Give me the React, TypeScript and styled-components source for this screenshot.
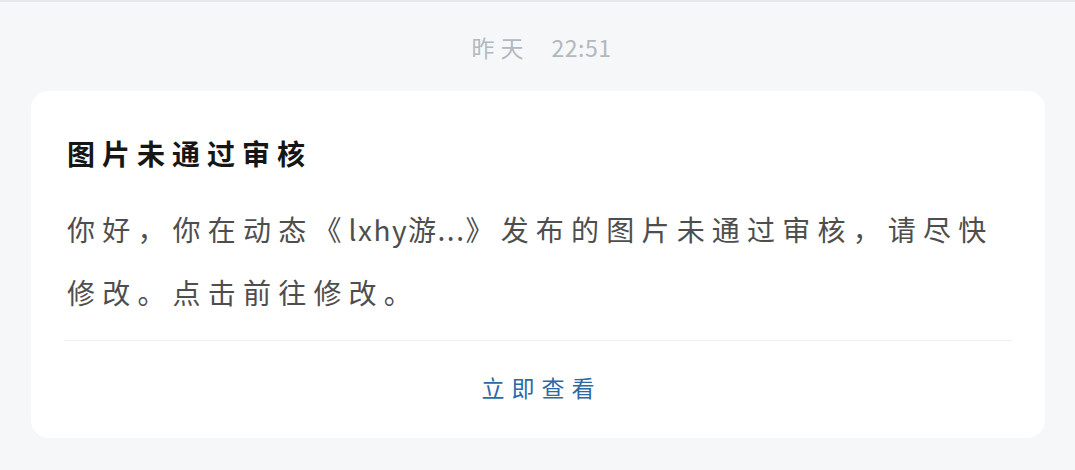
import React from "react";
import styled, { createGlobalStyle } from "styled-components";

const Global = createGlobalStyle`
  html, body {
    margin: 0;
    padding: 0;
    background: #f6f7f9;
  }
  body {
    font-family: "Noto Sans CJK SC", "Noto Sans", sans-serif;
  }
`;

const Page = styled.div`
  width: 1075px;
  height: 470px;
  box-sizing: border-box;
  border-top: 2px solid #e6e7ea;
  background: #f6f7f9;
  display: flex;
  flex-direction: column;
`;

const Time = styled.div`
  height: 89px;
  display: flex;
  align-items: center;
  justify-content: center;
  gap: 22px;
  padding-top: 2px;
  padding-left: 8px;
  box-sizing: border-box;
  color: #b3b7be;
  font-size: 23px;
  line-height: 23px;
`;

const TimePart = styled.span<{ $spacing: number }>`
  letter-spacing: ${(p) => p.$spacing}px;
`;

const Card = styled.div`
  margin: 0 30px 0 31px;
  background: #ffffff;
  border-radius: 18px;
  display: flex;
  flex-direction: column;
  padding: 0 33px;
  height: 347px;
  box-sizing: border-box;
`;

const Content = styled.div`
  padding: 45px 3px 0;
  display: flex;
  flex-direction: column;
  gap: 28px;
`;

const Title = styled.div`
  font-size: 28px;
  line-height: 34px;
  font-weight: 700;
  color: #161616;
  letter-spacing: 7px;
`;

const Body = styled.div`
  font-size: 28px;
  line-height: 63px;
  color: #4e4e4e;
  letter-spacing: 7.2px;
`;

const Line = styled.span`
  display: block;
  white-space: nowrap;
`;

const Latin = styled.span`
  letter-spacing: 1.5px;
`;

const Divider = styled.div`
  height: 1px;
  background: #f0f0f0;
  margin-top: 16px;
`;

const Action = styled.div`
  flex: 1;
  display: flex;
  align-items: center;
  justify-content: center;
  padding-bottom: 6px;
  color: #2c6aa7;
  font-size: 23px;
  letter-spacing: 7px;
  text-indent: 7px;
`;

export default function App() {
  return (
    <>
      <Global />
      <Page>
        <Time>
          <TimePart $spacing={6}>昨天</TimePart>
          <TimePart $spacing={0.5}>22:51</TimePart>
        </Time>
        <Card>
          <Content>
            <Title>图片未通过审核</Title>
            <Body>
              <Line>
                你好，你在动态《<Latin>lxhy游...</Latin>》发布的图片未通过审核，请尽快
              </Line>
              <Line>修改。点击前往修改。</Line>
            </Body>
          </Content>
          <Divider />
          <Action>立即查看</Action>
        </Card>
      </Page>
    </>
  );
}
